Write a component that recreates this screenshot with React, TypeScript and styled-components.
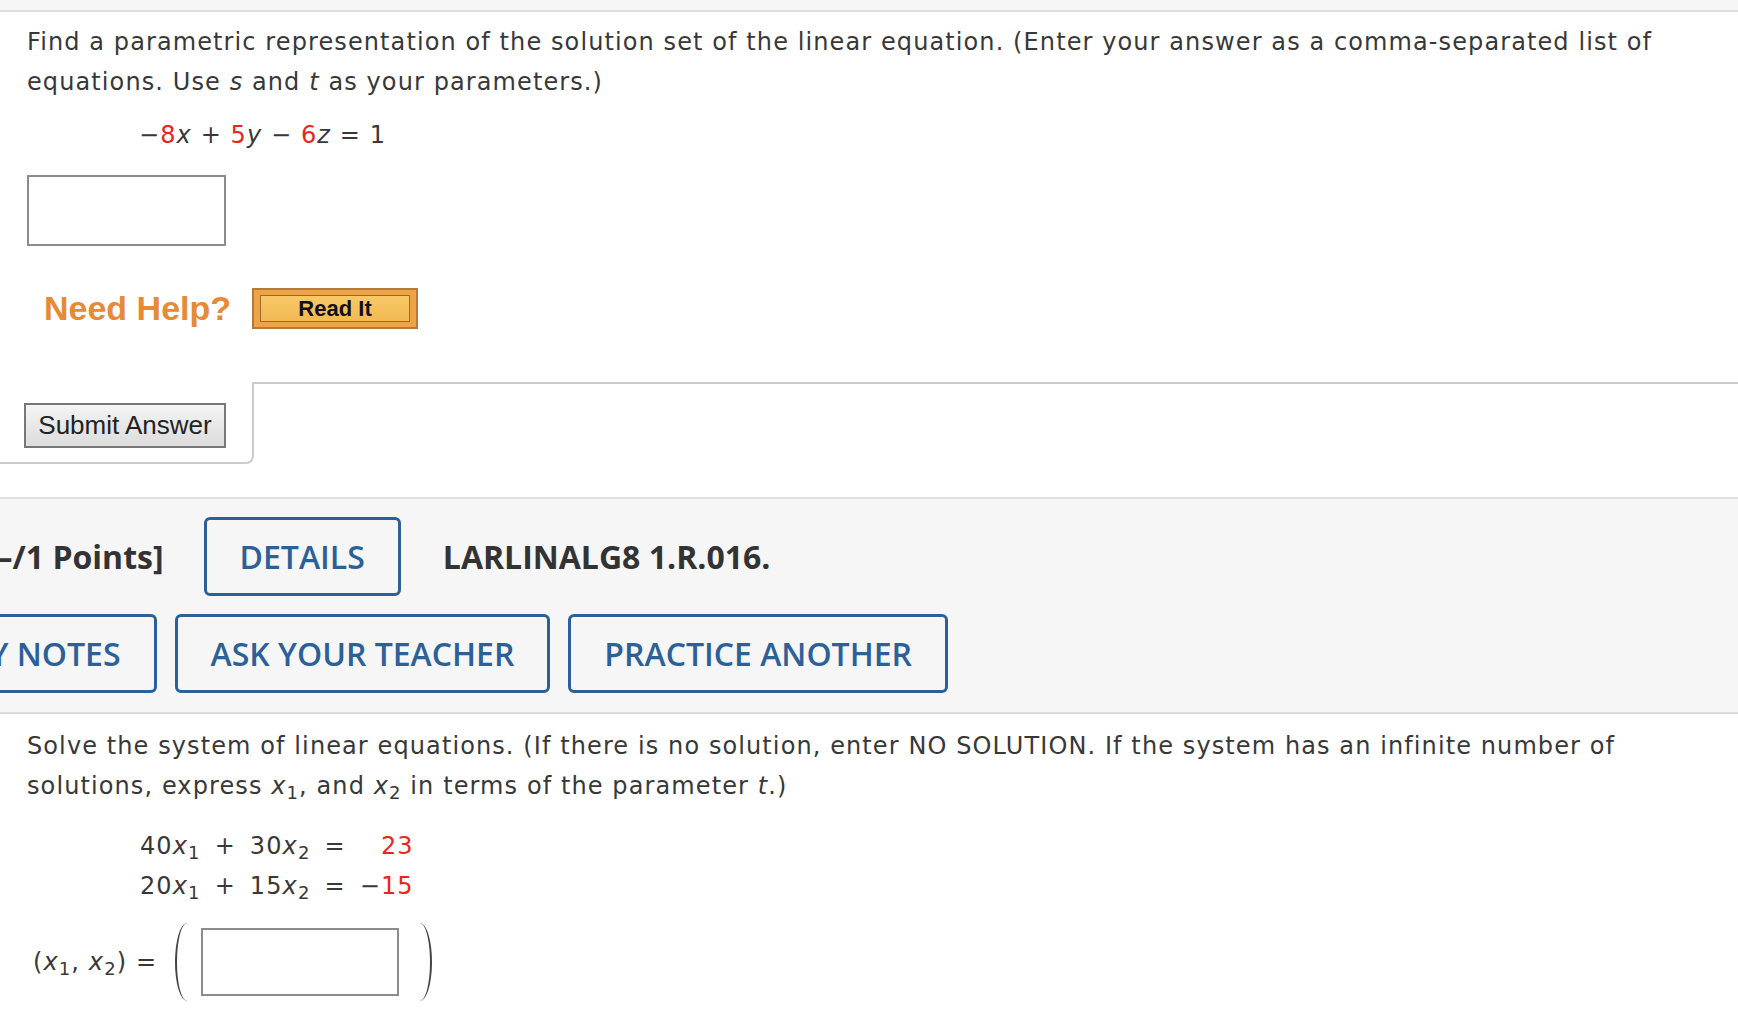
import React from 'react';
import styled, { createGlobalStyle } from 'styled-components';

const GlobalStyle = createGlobalStyle`
  html, body {
    margin: 0;
    padding: 0;
    background: #ffffff;
    overflow: hidden;
  }
  body {
    font-family: "DejaVu Sans", Verdana, sans-serif;
    color: #383838;
  }
`;

const Page = styled.div`
  width: 1738px;
  height: 1024px;
  overflow: hidden;
`;

const TopStrip = styled.div`
  height: 10px;
  background: #f5f5f5;
  border-bottom: 2px solid #dddddd;
`;

const Question = styled.div<{ $top?: number }>`
  padding: ${p => (p.$top ? p.$top : 10)}px 27px 0 27px;
`;

const Prompt = styled.p`
  margin: 0;
  font-size: 24px;
  letter-spacing: 1.1px;
  line-height: 40px;
  white-space: nowrap;
`;

const Var = styled.i`
  font-style: italic;
`;

const Red = styled.span`
  color: #e8261c;
`;

const Equation = styled.div`
  margin: 13px 0 0 112px;
  font-size: 24px;
  letter-spacing: 1.1px;
  line-height: 40px;
  white-space: nowrap;
`;

const AnswerBox = styled.div<{ $w: number; $h: number }>`
  width: ${p => p.$w}px;
  height: ${p => p.$h}px;
  box-sizing: border-box;
  border: 2px solid #8c8c8c;
  background: #ffffff;
`;

const FirstBox = styled.div`
  margin-top: 20px;
`;

const HelpRow = styled.div`
  display: flex;
  align-items: center;
  gap: 21px;
  margin: 42px 0 0 17px;
`;

const NeedHelp = styled.span`
  font-family: "Liberation Sans", Arial, sans-serif;
  font-weight: 700;
  font-size: 34px;
  color: #e68a36;
`;

const ReadItButton = styled.button`
  width: 166px;
  height: 41px;
  padding: 5px 6px;
  box-sizing: border-box;
  border: 2px solid #b47a3a;
  background: #eea346;
  cursor: pointer;
  display: flex;
`;

const ReadItInner = styled.span`
  flex: 1;
  display: flex;
  align-items: center;
  justify-content: center;
  border: 1px solid #a0692c;
  background: linear-gradient(#f8c867, #f2b954);
  font-family: "Liberation Sans", Arial, sans-serif;
  font-weight: 700;
  font-size: 22px;
  color: #111111;
`;

const SubmitRow = styled.div`
  display: flex;
  margin-top: 53px;
`;

const SubmitTab = styled.div`
  width: 254px;
  box-sizing: border-box;
  padding: 21px 0 14px 24px;
  border-right: 2px solid #cccccc;
  border-bottom: 2px solid #cccccc;
  border-bottom-right-radius: 8px;
`;

const SubmitButton = styled.button`
  width: 202px;
  height: 45px;
  box-sizing: border-box;
  border: 2px solid #777777;
  background: linear-gradient(#f4f4f4, #dcdcdc);
  font-family: "Liberation Sans", Arial, sans-serif;
  font-size: 26px;
  color: #222222;
  padding: 0;
  cursor: pointer;
`;

const SubmitRest = styled.div`
  flex: 1;
  border-top: 2px solid #cccccc;
`;

const Toolbar = styled.div`
  margin-top: 33px;
  background: #f6f6f6;
  border-top: 2px solid #dddddd;
  border-bottom: 2px solid #dddddd;
  padding: 18px 0 19px;
  display: flex;
  flex-direction: column;
  gap: 18px;
`;

const ToolRow = styled.div<{ $shift: number }>`
  display: flex;
  align-items: center;
  gap: 18px;
  margin-left: ${p => p.$shift}px;
`;

const Points = styled.span`
  font-family: "Open Sans", sans-serif;
  font-weight: 700;
  font-size: 32px;
  color: #333333;
  white-space: nowrap;
  margin-right: 22px;
`;

const Code = styled.span`
  font-family: "Open Sans", sans-serif;
  font-weight: 700;
  font-size: 32px;
  color: #333333;
  white-space: nowrap;
  margin-left: 24px;
`;

const ActionButton = styled.button`
  height: 79px;
  box-sizing: border-box;
  padding: 0 33px;
  border: 3px solid #2b6198;
  border-radius: 6px;
  background: #ffffff00;
  font-family: "Open Sans", sans-serif;
  font-weight: 600;
  font-size: 32px;
  color: #2b6198;
  white-space: nowrap;
  cursor: pointer;
`;

const SystemTable = styled.div`
  margin: 20px 0 0 113px;
  display: grid;
  grid-template-columns: auto auto auto auto auto;
  justify-content: start;
  column-gap: 14px;
  font-size: 24px;
  letter-spacing: 1.1px;
  line-height: 40px;
  width: max-content;
`;

const Cell = styled.span<{ $right?: boolean }>`
  justify-self: ${p => (p.$right ? 'end' : 'start')};
  white-space: nowrap;
`;

const Sub = styled.sub`
  font-size: 0.75em;
  vertical-align: -0.3em;
  line-height: 0;
`;

const AnswerRow = styled.div`
  display: flex;
  align-items: center;
  margin: 17px 0 0 6px;
  font-size: 24px;
  letter-spacing: 1.1px;
`;

const Label = styled.span`
  white-space: nowrap;
  margin-right: 18px;
`;

const Paren = styled.span<{ $side: 'left' | 'right' }>`
  width: 12px;
  height: 78px;
  box-sizing: border-box;
  ${p =>
    p.$side === 'left'
      ? `border-left: 2px solid #444; border-radius: 100% 0 0 100% / 50% 0 0 50%; margin-right: 14px;`
      : `border-right: 2px solid #444; border-radius: 0 100% 100% 0 / 0 50% 50% 0; margin-left: 21px;`}
`;

const App: React.FC = () => {
  return (
    <Page>
      <GlobalStyle />
      <TopStrip />
      <Question>
        <Prompt>
          Find a parametric representation of the solution set of the linear equation. (Enter your answer as a comma-separated list of
          <br />
          equations. Use <Var>s</Var> and <Var>t</Var> as your parameters.)
        </Prompt>
        <Equation>
          −<Red>8</Red><Var>x</Var> + <Red>5</Red><Var>y</Var> − <Red>6</Red><Var>z</Var> = 1
        </Equation>
        <FirstBox>
          <AnswerBox $w={199} $h={71} />
        </FirstBox>
        <HelpRow>
          <NeedHelp>Need Help?</NeedHelp>
          <ReadItButton>
            <ReadItInner>Read It</ReadItInner>
          </ReadItButton>
        </HelpRow>
      </Question>

      <SubmitRow>
        <SubmitTab>
          <SubmitButton>Submit Answer</SubmitButton>
        </SubmitTab>
        <SubmitRest />
      </SubmitRow>

      <Toolbar>
        <ToolRow $shift={-14}>
          <Points>[–/1 Points]</Points>
          <ActionButton>DETAILS</ActionButton>
          <Code>LARLINALG8 1.R.016.</Code>
        </ToolRow>
        <ToolRow $shift={-76}>
          <ActionButton>MY NOTES</ActionButton>
          <ActionButton>ASK YOUR TEACHER</ActionButton>
          <ActionButton>PRACTICE ANOTHER</ActionButton>
        </ToolRow>
      </Toolbar>

      <Question $top={12}>
        <Prompt>
          Solve the system of linear equations. (If there is no solution, enter NO SOLUTION. If the system has an infinite number of
          <br />
          solutions, express <Var>x</Var><Sub>1</Sub>, and <Var>x</Var><Sub>2</Sub> in terms of the parameter <Var>t</Var>.)
        </Prompt>
        <SystemTable>
          <Cell>40<Var>x</Var><Sub>1</Sub></Cell>
          <Cell>+</Cell>
          <Cell>30<Var>x</Var><Sub>2</Sub></Cell>
          <Cell>=</Cell>
          <Cell $right><Red>23</Red></Cell>
          <Cell>20<Var>x</Var><Sub>1</Sub></Cell>
          <Cell>+</Cell>
          <Cell>15<Var>x</Var><Sub>2</Sub></Cell>
          <Cell>=</Cell>
          <Cell $right>−<Red>15</Red></Cell>
        </SystemTable>
        <AnswerRow>
          <Label>(<Var>x</Var><Sub>1</Sub>, <Var>x</Var><Sub>2</Sub>) =</Label>
          <Paren $side="left" />
          <AnswerBox $w={198} $h={68} />
          <Paren $side="right" />
        </AnswerRow>
      </Question>
    </Page>
  );
};

export default App;
